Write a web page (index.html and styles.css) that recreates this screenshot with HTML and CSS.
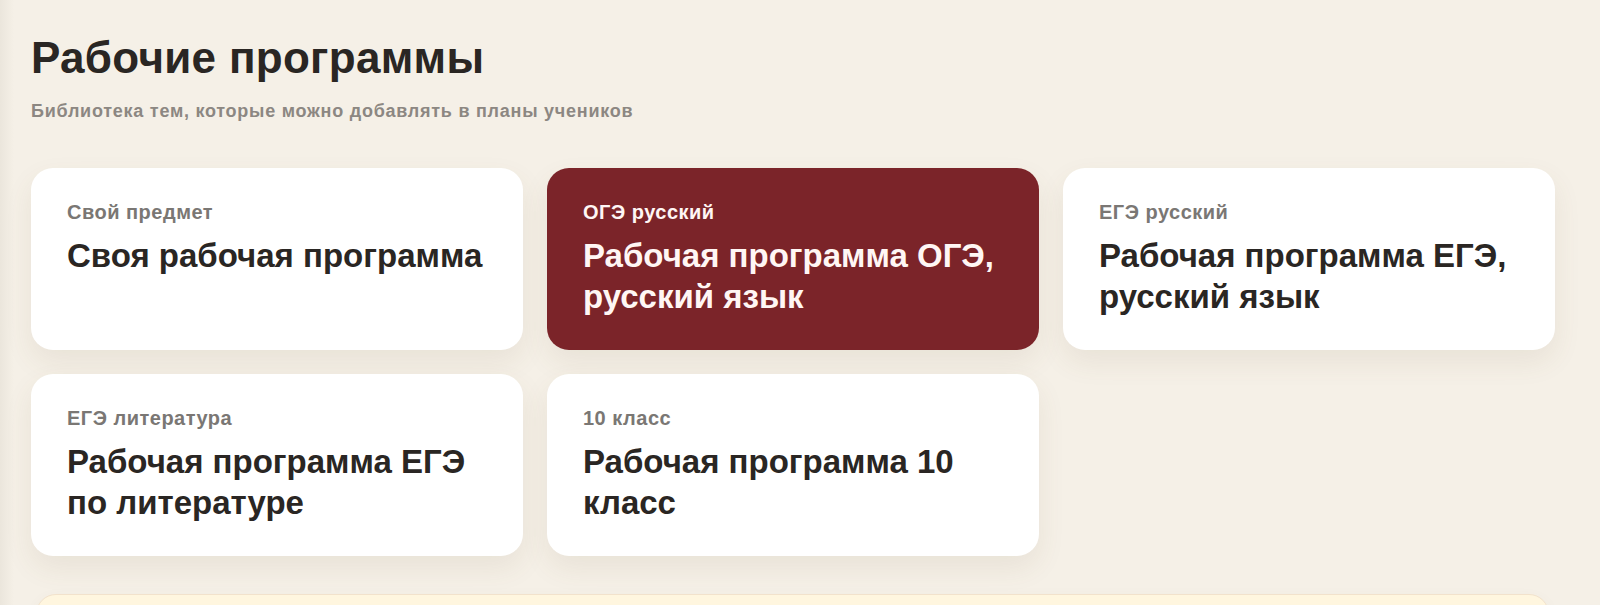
FILE: index.html
```html
<!DOCTYPE html>
<html lang="ru">
<head>
<meta charset="utf-8">
<title>Рабочие программы</title>
<link rel="stylesheet" href="styles.css">
</head>
<body>
<main class="page">
  <h1 class="title">Рабочие программы</h1>
  <p class="subtitle">Библиотека тем, которые можно добавлять в планы учеников</p>
  <section class="grid">
    <div class="card">
      <div class="card-label">Свой предмет</div>
      <div class="card-title">Своя рабочая программа</div>
    </div>
    <div class="card card-active">
      <div class="card-label">ОГЭ русский</div>
      <div class="card-title">Рабочая программа ОГЭ, русский язык</div>
    </div>
    <div class="card">
      <div class="card-label">ЕГЭ русский</div>
      <div class="card-title">Рабочая программа ЕГЭ, русский язык</div>
    </div>
    <div class="card">
      <div class="card-label">ЕГЭ литература</div>
      <div class="card-title">Рабочая программа ЕГЭ по литературе</div>
    </div>
    <div class="card">
      <div class="card-label">10 класс</div>
      <div class="card-title">Рабочая программа 10 класс</div>
    </div>
  </section>
  <div class="note"></div>
</main>
</body>
</html>
```

FILE: styles.css
```css
html, body {
  margin: 0;
  padding: 0;
}
body {
  background: #f5f0e7;
  background-image: linear-gradient(to right, #ebe6dc 0, #f5f0e7 14px);
  font-family: "Liberation Sans", Arial, sans-serif;
  color: #2a2623;
  height: 605px;
  overflow: hidden;
}
.page {
  padding: 32px 45px 0 31px;
}
.title {
  margin: 0;
  font-size: 44px;
  line-height: 1.2;
  font-weight: 700;
  letter-spacing: 0.3px;
  color: #2a2623;
}
.subtitle {
  margin: 14px 0 0;
  font-size: 18px;
  line-height: 25px;
  font-weight: 700;
  letter-spacing: 0.75px;
  color: #8c8782;
}
.grid {
  margin-top: 44px;
  display: grid;
  grid-template-columns: repeat(3, 1fr);
  gap: 24px;
}
.card {
  background: #ffffff;
  border-radius: 22px;
  padding: 32px 36px 33px;
  box-shadow: 0 12px 28px rgba(110, 90, 60, 0.09);
}
.card-label {
  font-size: 20px;
  line-height: 24px;
  font-weight: 700;
  letter-spacing: 0.5px;
  color: #7a7774;
  margin-bottom: 11px;
}
.card-title {
  font-size: 33px;
  line-height: 41px;
  font-weight: 700;
  color: #2a2623;
}
.card-active {
  background: #7b2429;
}
.card-active .card-label,
.card-active .card-title {
  color: #fff6f4;
}
.note {
  margin: 38px 6px 0 5px;
  height: 60px;
  background: #fff6df;
  border: 1px solid #f2e2cc;
  border-radius: 20px;
  box-shadow: 0 4px 14px rgba(120, 90, 50, 0.05);
}
```
